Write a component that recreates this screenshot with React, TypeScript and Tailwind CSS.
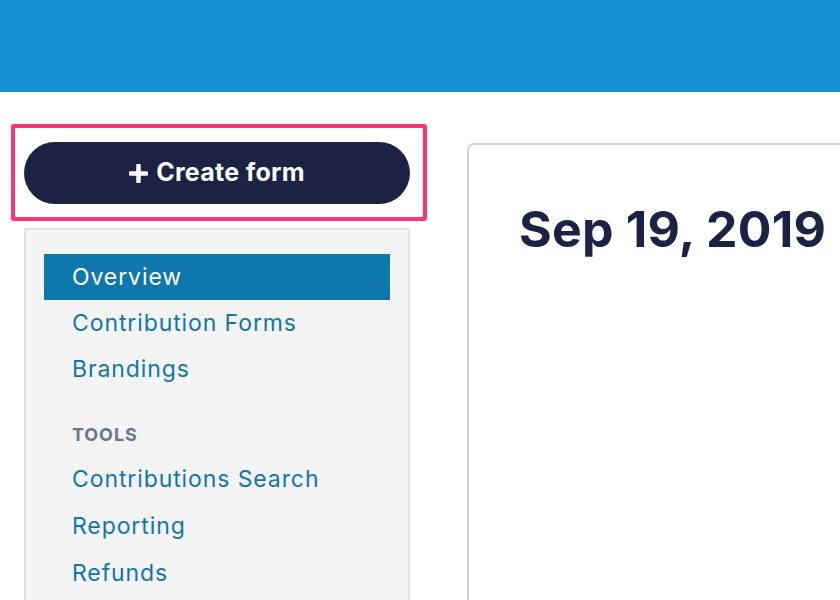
import React from 'react';

const navTop = ['Overview', 'Contribution Forms', 'Brandings'];
const navTools = ['Contributions Search', 'Reporting', 'Refunds'];

function NavItem({ label, active, tall }: { label: string; active?: boolean; tall?: boolean }) {
  return (
    <div
      className={`${tall ? 'h-[47px]' : 'h-[46px]'} flex items-center pl-[28px] text-[23px] tracking-[0.9px] ${
        active ? 'bg-[#0e77ab] text-white' : 'text-[#0f77ab]'
      }`}
    >
      {label}
    </div>
  );
}

export default function App() {
  return (
    <div className="w-[840px] h-[600px] overflow-hidden bg-white" style={{ fontFamily: 'Inter, "Open Sans", sans-serif' }}>
      <div className="h-[92px] bg-[#1592d3]" />

      <div className="flex pt-[32px]">
        {/* left column */}
        <div className="pl-[11px] w-[427px] shrink-0">
          <div className="border-4 border-[#ff3370] rounded-[3px] pt-[14px] pb-[13px] pl-[9px] pr-[11px]">
            <button className="w-[386px] h-[62px] rounded-full bg-[#1c2244] text-white flex items-center justify-center gap-[8px] text-[25px] font-bold tracking-[0.3px]">
              <svg width="19" height="19" viewBox="0 0 19 19">
                <path d="M9.5 1.5v16M1.5 9.5h16" stroke="white" strokeWidth="4.5" strokeLinecap="round" />
              </svg>
              <span>Create form</span>
            </button>
          </div>

          <div className="ml-[13px] mt-[7px] w-[386px] h-[400px] border-2 border-[#e2e2e2] bg-[#f4f4f4] px-[18px] pt-[24px]">
            {navTop.map((l, i) => (
              <NavItem key={l} label={l} active={i === 0} />
            ))}
            <div className="pl-[28px] pt-[34px] pb-[12px] text-[18px] font-bold tracking-[0.9px] text-[#6b7488] leading-[18px]">
              TOOLS
            </div>
            {navTools.map((l) => (
              <NavItem key={l} label={l} tall />
            ))}
          </div>
        </div>

        {/* main card */}
        <div className="ml-[40px] mt-[19px] flex-1 h-[500px] border-2 border-r-0 border-[#cfd4e0] rounded-tl-[7px] pl-[50px] pt-[59px]">
          <h1 className="text-[50px] font-bold text-[#1c2244] whitespace-nowrap leading-none tracking-[0.2px]">
            Sep 19, 2019 - Sep 26, 2019
          </h1>
        </div>
      </div>
    </div>
  );
}
